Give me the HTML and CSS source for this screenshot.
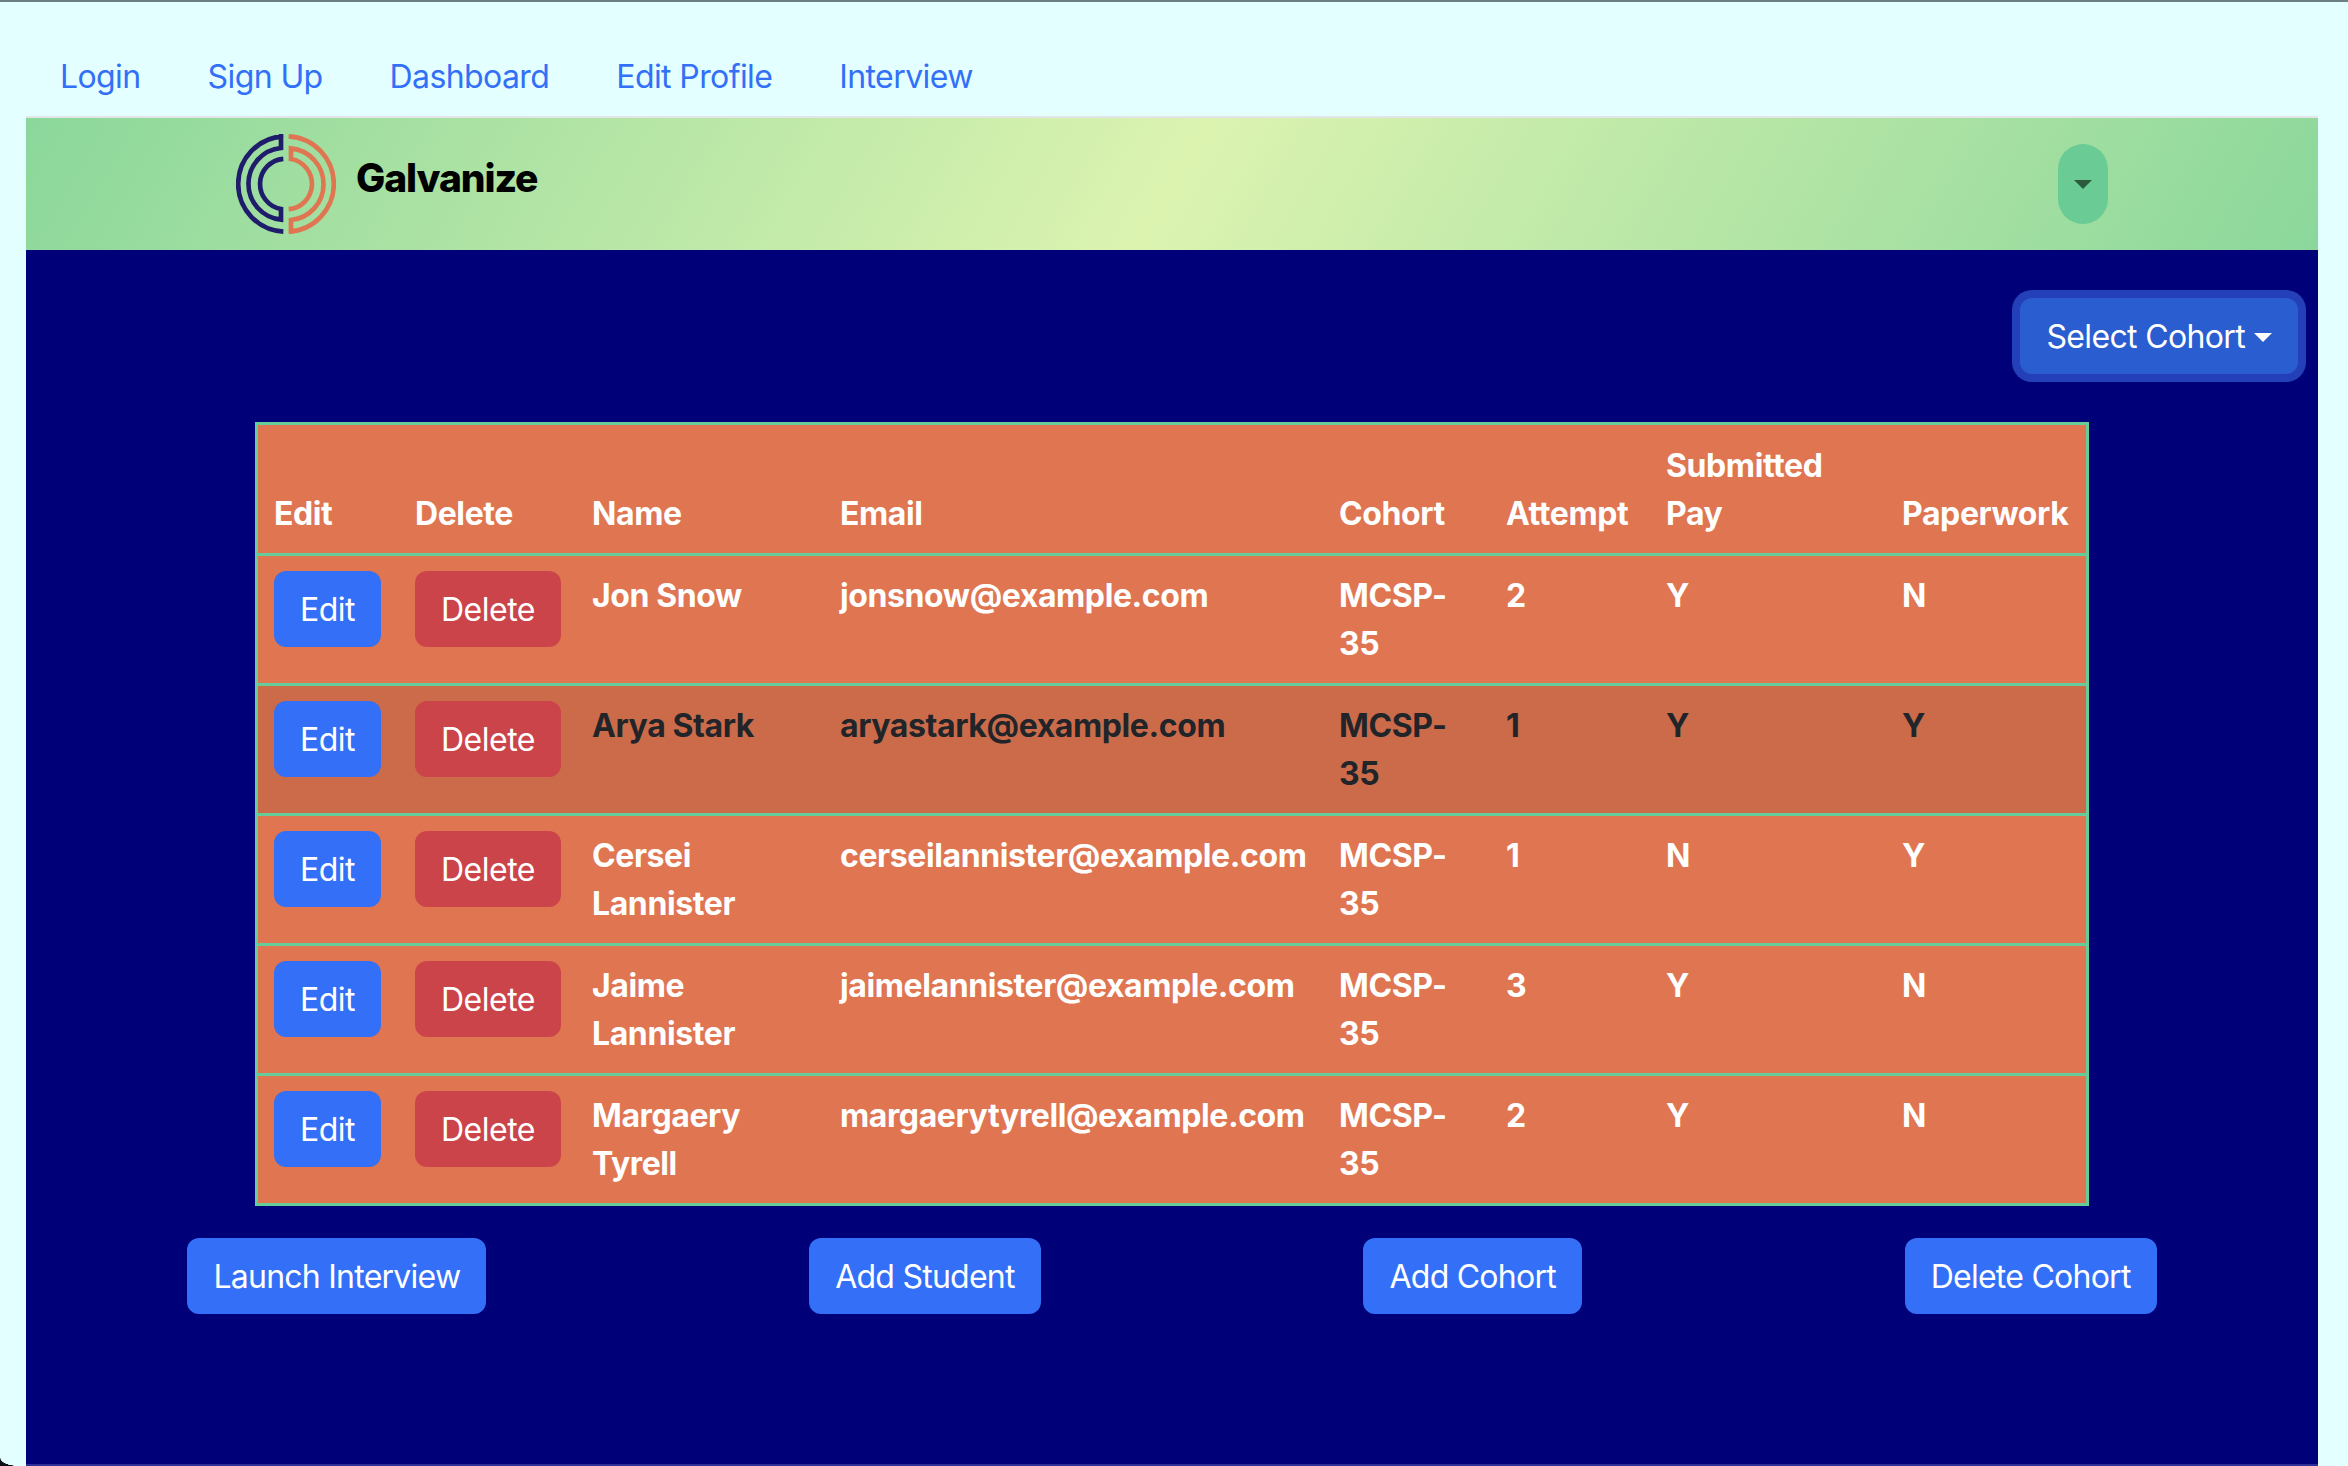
FILE: index.html
```html
<!DOCTYPE html>
<html lang="en">
<head>
    <meta charset="UTF-8">
    <meta name="viewport" content="width=device-width, initial-scale=1.0">
    <title>Galvanize Dashboard</title>
    <link rel="stylesheet" href="styles.css">
</head>
<body>
    <div class="page">
        <nav class="topLinks">
            <a href="#">Login</a>
            <a href="#">Sign Up</a>
            <a href="#">Dashboard</a>
            <a href="#">Edit Profile</a>
            <a href="#">Interview</a>
        </nav>

        <header class="brandBar">
            <div class="brand">
                <svg class="logo" viewBox="30 30 300 300" aria-hidden="true">
                    <path class="spiral navy" d="M172 322.8A143 143 0 0 1 172 37.2H165V72A108 108 0 0 0 165 287V255A76 76 0 0 1 172 104.4"/>
                    <path class="spiral coral" transform="rotate(180 180 180)" d="M172 322.8A143 143 0 0 1 172 37.2H165V72A108 108 0 0 0 165 287V255A76 76 0 0 1 172 104.4"/>
                </svg>
                <span class="brandName">Galvanize</span>
            </div>
            <button class="toggler" type="button" aria-label="Menu"><span class="caret"></span></button>
        </header>

        <main class="content">
            <div class="cohortRow">
                <button class="btn btnFocus" type="button">Select Cohort<span class="caret caretLight"></span></button>
            </div>

            <table class="students">
                <colgroup>
                    <col class="colEdit">
                    <col class="colDelete">
                    <col class="colName">
                    <col class="colEmail">
                    <col class="colCohort">
                    <col class="colAttempt">
                    <col class="colPay">
                    <col class="colPaper">
                </colgroup>
                <thead>
                    <tr>
                        <th>Edit</th>
                        <th>Delete</th>
                        <th>Name</th>
                        <th>Email</th>
                        <th>Cohort</th>
                        <th>Attempt</th>
                        <th>Submitted Pay</th>
                        <th>Paperwork</th>
                    </tr>
                </thead>
                <tbody>
                    <tr>
                        <td><button class="btn" type="button">Edit</button></td>
                        <td><button class="btn btnRed" type="button">Delete</button></td>
                        <td>Jon Snow</td>
                        <td>jonsnow@example.com</td>
                        <td>MCSP-35</td>
                        <td>2</td>
                        <td>Y</td>
                        <td>N</td>
                    </tr>
                    <tr>
                        <td><button class="btn" type="button">Edit</button></td>
                        <td><button class="btn btnRed" type="button">Delete</button></td>
                        <td>Arya Stark</td>
                        <td>aryastark@example.com</td>
                        <td>MCSP-35</td>
                        <td>1</td>
                        <td>Y</td>
                        <td>Y</td>
                    </tr>
                    <tr>
                        <td><button class="btn" type="button">Edit</button></td>
                        <td><button class="btn btnRed" type="button">Delete</button></td>
                        <td>Cersei Lannister</td>
                        <td>cerseilannister@example.com</td>
                        <td>MCSP-35</td>
                        <td>1</td>
                        <td>N</td>
                        <td>Y</td>
                    </tr>
                    <tr>
                        <td><button class="btn" type="button">Edit</button></td>
                        <td><button class="btn btnRed" type="button">Delete</button></td>
                        <td>Jaime Lannister</td>
                        <td>jaimelannister@example.com</td>
                        <td>MCSP-35</td>
                        <td>3</td>
                        <td>Y</td>
                        <td>N</td>
                    </tr>
                    <tr>
                        <td><button class="btn" type="button">Edit</button></td>
                        <td><button class="btn btnRed" type="button">Delete</button></td>
                        <td>Margaery Tyrell</td>
                        <td>margaerytyrell@example.com</td>
                        <td>MCSP-35</td>
                        <td>2</td>
                        <td>Y</td>
                        <td>N</td>
                    </tr>
                </tbody>
            </table>

            <div class="actions">
                <button class="btn" type="button">Launch Interview</button>
                <button class="btn" type="button">Add Student</button>
                <button class="btn" type="button">Add Cohort</button>
                <button class="btn" type="button">Delete Cohort</button>
            </div>
        </main>
    </div>
</body>
</html>
```

FILE: styles.css
```css
html, body {
    margin: 0;
    height: 100%;
}

body {
    background-color: #e3ffff;
    font-family: Inter, "Liberation Sans", sans-serif;
    font-size: 32px;
    line-height: 48px;
    letter-spacing: -0.6px;
    overflow: hidden;
}

.page {
    position: relative;
    box-sizing: border-box;
    height: 1466px;
    border-top: 2px solid #6b7f85;
    padding: 0 30px 0 26px;
    display: flex;
    flex-direction: column;
}

/* rounded window corner left in the capture */
.page::after {
    content: "";
    position: absolute;
    left: 0;
    bottom: 0;
    width: 18px;
    height: 8px;
    background: radial-gradient(ellipse 18px 8px at 100% 0, transparent 96%, #0b1012 100%);
}

.topLinks {
    display: flex;
    gap: 67px;
    padding: 51px 34px 15px;
    border-bottom: 2px solid #e2e6e8;
}

.topLinks a {
    color: #3370f7;
    text-decoration: none;
}

.brandBar {
    height: 132px;
    padding: 0 210px;
    display: flex;
    justify-content: space-between;
    align-items: center;
    background: linear-gradient(120deg, #8bd79b, #dcf3b0, #8bd79b);
}

.brand {
    display: flex;
    align-items: center;
    gap: 20px;
}

.logo {
    width: 100px;
    height: 100px;
}

.spiral {
    fill: none;
    stroke-width: 14;
}

.navy {
    stroke: #1f1d6b;
}

.coral {
    stroke: #e07552;
}

.brandName {
    font-size: 39px;
    font-weight: 800;
    letter-spacing: -1.1px;
    color: #000;
    margin-top: -12px;
}

.toggler {
    width: 50px;
    height: 80px;
    padding: 0;
    border: none;
    border-radius: 25px;
    background-color: #6bcb94;
    display: flex;
    justify-content: center;
    align-items: center;
}

.caret {
    width: 0;
    height: 0;
    border-top: 9px solid #2d5a3d;
    border-left: 9px solid transparent;
    border-right: 9px solid transparent;
}

.caretLight {
    border-top-color: #fff;
    margin-left: 9px;
}

.content {
    flex: 1;
    background-color: #000079;
    padding-top: 48px;
    border-bottom: 2px solid #2e2e96;
}

.cohortRow {
    display: flex;
    justify-content: flex-end;
    padding-right: 20px;
    margin-bottom: 48px;
}

.btn {
    height: 76px;
    padding: 2px 26px 0;
    border: none;
    border-radius: 12px;
    background-color: #3370f7;
    color: #fff;
    font-family: inherit;
    font-size: 32px;
    font-weight: 400;
    line-height: 48px;
    letter-spacing: -0.75px;
    white-space: nowrap;
}

.btnRed {
    background-color: #cb444a;
}

.btnFocus {
    background-color: #2a5dd0;
    box-shadow: 0 0 0 8px #2340b8;
    display: flex;
    align-items: center;
    letter-spacing: -0.65px;
}

.students {
    box-sizing: border-box;
    width: 80%;
    margin: 0 auto;
    table-layout: fixed;
    border-collapse: separate;
    border-spacing: 0;
    border: 3px solid #66cc99;
    background-color: #e07552;
    color: #fff;
    font-weight: 700;
    letter-spacing: -0.4px;
}

.colEdit { width: 141px; }
.colDelete { width: 177px; }
.colName { width: 248px; }
.colEmail { width: 499px; }
.colCohort { width: 167px; }
.colAttempt { width: 160px; }
.colPay { width: 236px; }
.colPaper { width: 200px; }

.students th {
    padding: 17px 16px 15px;
    text-align: left;
    vertical-align: bottom;
}

.students td {
    padding: 16px 16px 15px;
    vertical-align: top;
    border-top: 3px solid #66cc99;
}

.students td .btn {
    margin-top: -1px;
    letter-spacing: -0.5px;
}

.students tbody tr:nth-child(2) td {
    background-color: #cc6b4a;
    color: #212529;
}

.actions {
    display: flex;
    justify-content: space-around;
    margin-top: 32px;
}
```
